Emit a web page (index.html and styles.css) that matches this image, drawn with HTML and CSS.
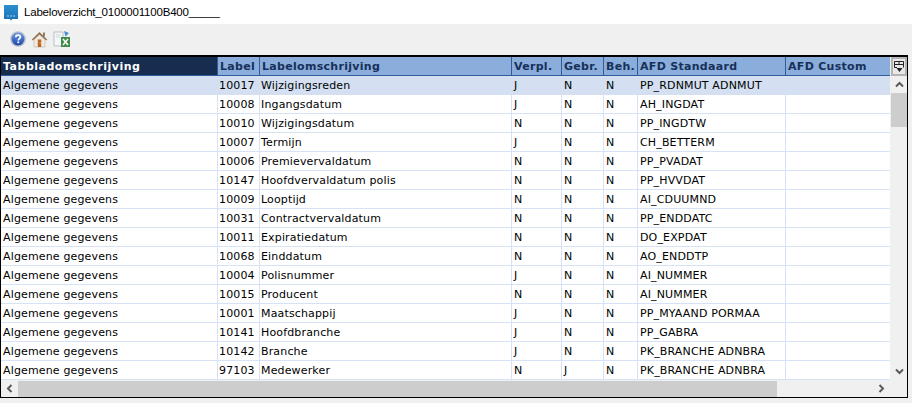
FILE: index.html
```html
<!DOCTYPE html>
<html lang="nl">
<head>
<meta charset="utf-8">
<title>Labeloverzicht</title>
<link rel="stylesheet" href="styles.css">
</head>
<body>
<div class="titlebar">
  <svg class="appicon" width="16" height="17" viewBox="0 0 16 17"><defs><linearGradient id="ag" x1="0" y1="0" x2="0" y2="1"><stop offset="0" stop-color="#2a8fd0"/><stop offset="1" stop-color="#1a72b4"/></linearGradient></defs><path d="M1 0H15V14H9L8 16L7 14H1Z" fill="url(#ag)"/><path d="M4 11H12" stroke="#a9d2ee" stroke-width="1" stroke-dasharray="2 1"/></svg>
  <span class="title">Labeloverzicht_0100001100B400_____</span>
</div>
<div class="toolbar">
  <svg width="16" height="16" viewBox="0 0 16 16"><defs><linearGradient id="hg" x1="0" y1="0" x2="0" y2="1"><stop offset="0" stop-color="#6f9ae6"/><stop offset="1" stop-color="#1c44a8"/></linearGradient></defs><circle cx="8" cy="8" r="7.8" fill="#b9bec8"/><circle cx="8" cy="8" r="6.4" fill="url(#hg)"/><path d="M5.8 6.2C5.8 3.4 10.4 3.4 10.4 6C10.4 7.6 8.3 7.6 8.3 9.4" fill="none" stroke="#fff" stroke-width="1.7"/><rect x="7.4" y="10.4" width="1.8" height="1.8" fill="#fff"/></svg>
  <svg width="17" height="17" viewBox="0 0 17 17"><rect x="12" y="1.5" width="2" height="4" fill="#9a7a5a"/><path d="M3 8.5L8.5 3.5L14 8.5V16H3Z" fill="#f1e9dc" stroke="#c4b6a0" stroke-width=".6"/><path d="M8.5 1L.8 8.5L1.8 9.5L8.5 3.4L15.2 9.5L16.2 8.5Z" fill="#8f7256"/><rect x="6.8" y="8.5" width="3.4" height="7.5" fill="#b8662a"/><rect x="8.6" y="11.5" width="1" height="1" fill="#f0d080"/></svg>
  <svg width="17" height="17" viewBox="0 0 17 17"><path d="M1 1H10V15H1Z" fill="#f4f6f8" stroke="#b9bfc5"/><path d="M3 4H8M3 6H7" stroke="#d4d8dc"/><path d="M11 0L16 2L12.5 5.5Z" fill="#4a8fd0"/><rect x="8" y="6" width="9" height="10" fill="#3f8a48"/><path d="M10 8L15 14M15 8L10 14" stroke="#fff" stroke-width="1.5"/></svg>
</div>
<div class="grid">
  <div class="grid-body">
    <table class="labels">
      <colgroup>
        <col class="c-tab"><col class="c-label"><col class="c-oms"><col class="c-verpl"><col class="c-gebr"><col class="c-beh"><col class="c-std"><col class="c-cus">
      </colgroup>
      <thead>
        <tr>
          <th class="active">Tabbladomschrijving</th><th>Label</th><th>Labelomschrijving</th><th>Verpl.</th><th>Gebr.</th><th>Beh.</th><th>AFD Standaard</th><th>AFD Custom</th>
        </tr>
      </thead>
      <tbody>
        <tr class="selected"><td>Algemene gegevens</td><td>10017</td><td>Wijzigingsreden</td><td>J</td><td>N</td><td>N</td><td>PP_RDNMUT ADNMUT</td><td></td></tr>
        <tr><td>Algemene gegevens</td><td>10008</td><td>Ingangsdatum</td><td>J</td><td>N</td><td>N</td><td>AH_INGDAT</td><td></td></tr>
        <tr><td>Algemene gegevens</td><td>10010</td><td>Wijzigingsdatum</td><td>N</td><td>N</td><td>N</td><td>PP_INGDTW</td><td></td></tr>
        <tr><td>Algemene gegevens</td><td>10007</td><td>Termijn</td><td>J</td><td>N</td><td>N</td><td>CH_BETTERM</td><td></td></tr>
        <tr><td>Algemene gegevens</td><td>10006</td><td>Premievervaldatum</td><td>N</td><td>N</td><td>N</td><td>PP_PVADAT</td><td></td></tr>
        <tr><td>Algemene gegevens</td><td>10147</td><td>Hoofdvervaldatum polis</td><td>N</td><td>N</td><td>N</td><td>PP_HVVDAT</td><td></td></tr>
        <tr><td>Algemene gegevens</td><td>10009</td><td>Looptijd</td><td>N</td><td>N</td><td>N</td><td>AI_CDUUMND</td><td></td></tr>
        <tr><td>Algemene gegevens</td><td>10031</td><td>Contractvervaldatum</td><td>N</td><td>N</td><td>N</td><td>PP_ENDDATC</td><td></td></tr>
        <tr><td>Algemene gegevens</td><td>10011</td><td>Expiratiedatum</td><td>N</td><td>N</td><td>N</td><td>DO_EXPDAT</td><td></td></tr>
        <tr><td>Algemene gegevens</td><td>10068</td><td>Einddatum</td><td>N</td><td>N</td><td>N</td><td>AO_ENDDTP</td><td></td></tr>
        <tr><td>Algemene gegevens</td><td>10004</td><td>Polisnummer</td><td>J</td><td>N</td><td>N</td><td>AI_NUMMER</td><td></td></tr>
        <tr><td>Algemene gegevens</td><td>10015</td><td>Producent</td><td>N</td><td>N</td><td>N</td><td>AI_NUMMER</td><td></td></tr>
        <tr><td>Algemene gegevens</td><td>10001</td><td>Maatschappij</td><td>J</td><td>N</td><td>N</td><td>PP_MYAAND PORMAA</td><td></td></tr>
        <tr><td>Algemene gegevens</td><td>10141</td><td>Hoofdbranche</td><td>J</td><td>N</td><td>N</td><td>PP_GABRA</td><td></td></tr>
        <tr><td>Algemene gegevens</td><td>10142</td><td>Branche</td><td>J</td><td>N</td><td>N</td><td>PK_BRANCHE ADNBRA</td><td></td></tr>
        <tr><td>Algemene gegevens</td><td>97103</td><td>Medewerker</td><td>N</td><td>J</td><td>N</td><td>PK_BRANCHE ADNBRA</td><td></td></tr>
      </tbody>
    </table>
    <div class="vscroll">
      <div class="corner"><svg width="12" height="13" viewBox="0 0 12 13"><path d="M1.5 1.5H10.5V7.5M1.5 1.5V7.5H4M1.5 4.5H10.5M6 1.5V5" fill="none" stroke="#222"/><path d="M3.5 8H9.5L6.5 12Z" fill="#222"/></svg></div>
      <div class="arrow"><svg width="9" height="7" viewBox="0 0 9 7"><path d="M1 5.5L4.5 2L8 5.5" fill="none" stroke="#5a5a5a" stroke-width="2"/></svg></div>
      <div class="vthumb"></div>
      <div class="vtrack"></div>
      <div class="arrow"><svg width="9" height="7" viewBox="0 0 9 7"><path d="M1 1.5L4.5 5L8 1.5" fill="none" stroke="#5a5a5a" stroke-width="2"/></svg></div>
    </div>
  </div>
  <div class="hscroll">
    <div class="harrow"><svg width="7" height="9" viewBox="0 0 7 9"><path d="M5.5 1L2 4.5L5.5 8" fill="none" stroke="#5a5a5a" stroke-width="2"/></svg></div>
    <div class="hthumb"></div>
    <div class="htrack"></div>
    <div class="harrow"><svg width="7" height="9" viewBox="0 0 7 9"><path d="M1.5 1L5 4.5L1.5 8" fill="none" stroke="#5a5a5a" stroke-width="2"/></svg></div>
    <div class="hcorner"></div>
  </div>
</div>
</body>
</html>
```
FILE: styles.css
```css
* { box-sizing: border-box; }
html, body { margin: 0; padding: 0; }
body {
  width: 912px;
  height: 403px;
  overflow: hidden;
  background: #f0f0f0;
  font-family: "DejaVu Sans", Verdana, sans-serif;
  display: flex;
  flex-direction: column;
}
.titlebar {
  height: 24px;
  background: #fff;
  display: flex;
  align-items: center;
  gap: 5px;
  padding-left: 3px;
}
.appicon { flex: none; margin-top: 3px; }
.title {
  font-family: "Liberation Sans", Arial, sans-serif;
  font-size: 11.5px;
  letter-spacing: -0.2px;
  color: #000;
}
.toolbar {
  height: 31px;
  display: flex;
  align-items: center;
  gap: 5px;
  padding: 0 0 1px 10px;
}
.grid {
  width: 908px;
  height: 343px;
  border-top: 2px solid #000;
  border-left: 1px solid #000;
  border-right: 1px solid #000;
  border-bottom: 1px solid #000;
  background: #f0f0f0;
  display: flex;
  flex-direction: column;
  overflow: hidden;
}
.grid-body {
  height: 323px;
  display: flex;
  overflow: hidden;
}
.labels {
  width: 889px;
  flex: none;
  align-self: flex-start;
  table-layout: fixed;
  border-collapse: separate;
  border-spacing: 0;
  background: #fff;
  font-size: 11px;
  letter-spacing: 0.15px;
  color: #000;
}
.c-tab { width: 217px; }
.c-label { width: 42px; }
.c-oms { width: 252px; }
.c-verpl { width: 50px; }
.c-gebr { width: 42px; }
.c-beh { width: 34px; }
.c-std { width: 148px; }
.c-cus { width: 104px; }
.labels th {
  height: 19px;
  padding: 0 0 0 2px;
  background: #8aaddb;
  color: #17305a;
  font-size: 11px;
  font-weight: bold;
  text-align: left;
  letter-spacing: 0.3px;
  white-space: nowrap;
  overflow: hidden;
  border-right: 1px solid #2f5c9a;
  border-bottom: 1px solid #2f5c9a;
}
.labels th:last-child { border-right: 0; }
.labels th.active {
  background: #172d50;
  color: #fff;
  letter-spacing: 0.5px;
}
.labels td {
  height: 19px;
  padding: 1px 0 0 2px;
  white-space: nowrap;
  overflow: hidden;
  border-right: 1px solid #d6e2f5;
  border-bottom: 1px solid #d6e2f5;
}
.labels td:nth-child(2),
.labels td:nth-child(3) { padding-left: 1px; }
.labels td:last-child { border-right: 0; }
.selected td {
  background: #d4e0f2;
  border-right-color: #d4e0f2;
  border-bottom-color: #d4e0f2;
}
.vscroll {
  flex: 1;
  display: flex;
  flex-direction: column;
  padding-left: 1px;
}
.corner {
  height: 19px;
  border: 2px solid #b4b4b4;
  background: #e8e8e8;
  display: flex;
  align-items: center;
  justify-content: center;
}
.arrow {
  height: 17px;
  display: flex;
  align-items: center;
  justify-content: center;
}
.vthumb {
  height: 34px;
  background: #cdcdcd;
}
.vtrack { flex: 1; }
.hscroll {
  flex: 1;
  display: flex;
  align-items: stretch;
}
.harrow {
  width: 17px;
  display: flex;
  align-items: center;
  justify-content: center;
}
.hthumb {
  width: 759px;
  margin-top: 1px;
  background: #cdcdcd;
}
.htrack { flex: 1; }
.hcorner { width: 17px; }
```
